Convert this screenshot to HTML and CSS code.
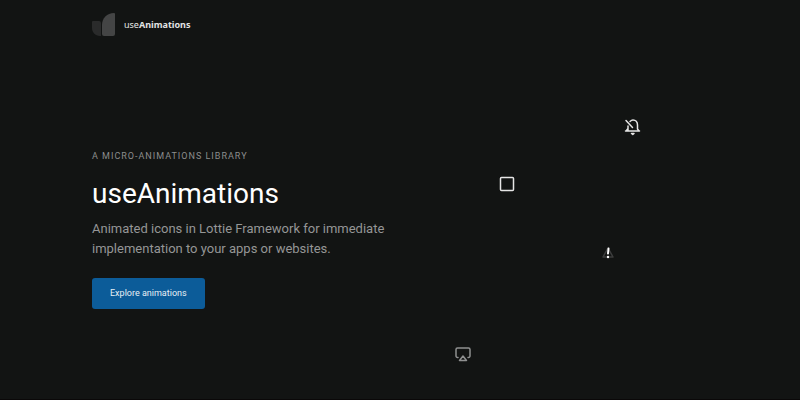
FILE: index.html
```html
<!DOCTYPE html>
<html lang="en">
<head>
    <meta charset="UTF-8">
    <meta name="viewport" content="width=device-width, initial-scale=1.0">
    <title>useAnimations</title>
    <link rel="stylesheet" href="styles.css">
</head>
<body>
    <div class="page">
        <header class="header">
            <a href="#" class="logo">
                <svg class="logo-mark" viewBox="0 0 24 24" aria-hidden="true">
                    <path fill="#2a2b2b" d="M1 8h6a2 2 0 0 1 2 2v13H8c-5 0-8-4-8-8V9a1 1 0 0 1 1-1z"/>
                    <path fill="#444545" d="M22 0a1 1 0 0 1 1 1v20a2 2 0 0 1-2 2H12a2 2 0 0 1-2-2V12C10 5 15 0 22 0z"/>
                </svg>
                <span class="logo-text">use<b>Animations</b></span>
            </a>
        </header>

        <main class="hero">
            <div class="hero-text">
                <p class="eyebrow">A micro-animations library</p>
                <h1>useAnimations</h1>
                <p class="lead">Animated icons in Lottie Framework for immediate implementation to your apps or websites.</p>
                <button type="button" class="explore">Explore animations</button>
            </div>
        </main>

        <!-- floating icons -->
        <div class="icons" aria-hidden="true">
            <svg class="icon bell" viewBox="0 0 18 18">
                <path d="M1.500 13h14M4 12.500V8M6 3.500C7 2.500 7.500 2 9 2C11.500 2 13.500 4 13.500 7v4l1.500 2M4 10.500l-1.500 2M2 2.500l6.500 7"/>
                <path d="M7.500 15.500h2.500l-1.200 1z"/>
            </svg>
            <svg class="icon square" viewBox="0 0 18 18">
                <rect x="2.500" y="2.500" width="13" height="13" rx="1"/>
            </svg>
            <svg class="icon alert" viewBox="0 0 18 18">
                <path class="outline" d="M9 4l5 9H4z"/>
                <path class="mark" d="M9.500 4.500L9 9.500"/>
                <circle class="dot" cx="9" cy="13" r="1.200"/>
            </svg>
            <svg class="icon airplay" viewBox="0 0 18 18">
                <path d="M4 12.500H3.500A1.500 1.500 0 0 1 2 11V4.500A1.500 1.500 0 0 1 3.500 3h11A1.500 1.500 0 0 1 16 4.500V11a1.500 1.500 0 0 1-1.500 1.500H14"/>
                <path d="M9 11l3.500 4.500h-7z"/>
            </svg>
        </div>
    </div>
</body>
</html>
```
FILE: styles.css
```css
* {
    box-sizing: border-box;
}

body {
    margin: 0;
    font-family: Roboto, Arial, sans-serif;
    background-color: #121413;
    color: #fff;
}

.page {
    position: relative;
    min-height: 100vh;
    padding: 0 92px;
    border-bottom: 1px solid #0a0808;
}

.header {
    padding-top: 13px;
}

.logo {
    display: inline-flex;
    align-items: center;
    gap: 8px;
    color: #e4e4e4;
    text-decoration: none;
}

.logo-mark {
    width: 24px;
    height: 24px;
}

.logo-text {
    font-family: "Noto Sans", "Open Sans", sans-serif;
    font-size: 9px;
    line-height: 12px;
}

.hero {
    padding-top: 109px;
}

.hero-text {
    max-width: 320px;
}

.eyebrow {
    margin: 0;
    font-size: 9px;
    line-height: 12px;
    letter-spacing: 1px;
    text-transform: uppercase;
    color: #8c8d8d;
}

h1 {
    margin: 12px 0 5px;
    font-size: 28px;
    font-weight: 400;
    line-height: 40px;
}

.lead {
    margin: 0 0 19px;
    font-size: 13px;
    line-height: 20px;
    color: #959696;
}

.explore {
    padding: 8px 18px;
    border: none;
    border-radius: 3px;
    background-color: #0c5c99;
    color: #e8eff5;
    font-family: inherit;
    font-size: 9px;
    line-height: 15px;
    cursor: pointer;
}

.icons {
    position: absolute;
    inset: 0;
    pointer-events: none;
}

.icon {
    position: absolute;
    width: 18px;
    height: 18px;
    fill: none;
    stroke: #e6e6e6;
    stroke-width: 1.5;
    stroke-linecap: round;
    stroke-linejoin: round;
}

.bell {
    left: 624px;
    top: 118px;
}

.square {
    left: 498px;
    top: 175px;
}

.alert {
    left: 599px;
    top: 244px;
}

.alert .outline {
    stroke: #3c3d3d;
}

.alert .mark {
    stroke: #fff;
    stroke-width: 2;
}

.alert .dot {
    fill: #fff;
    stroke: none;
}

.airplay {
    left: 454px;
    top: 345px;
    stroke: #8f9090;
}
```
